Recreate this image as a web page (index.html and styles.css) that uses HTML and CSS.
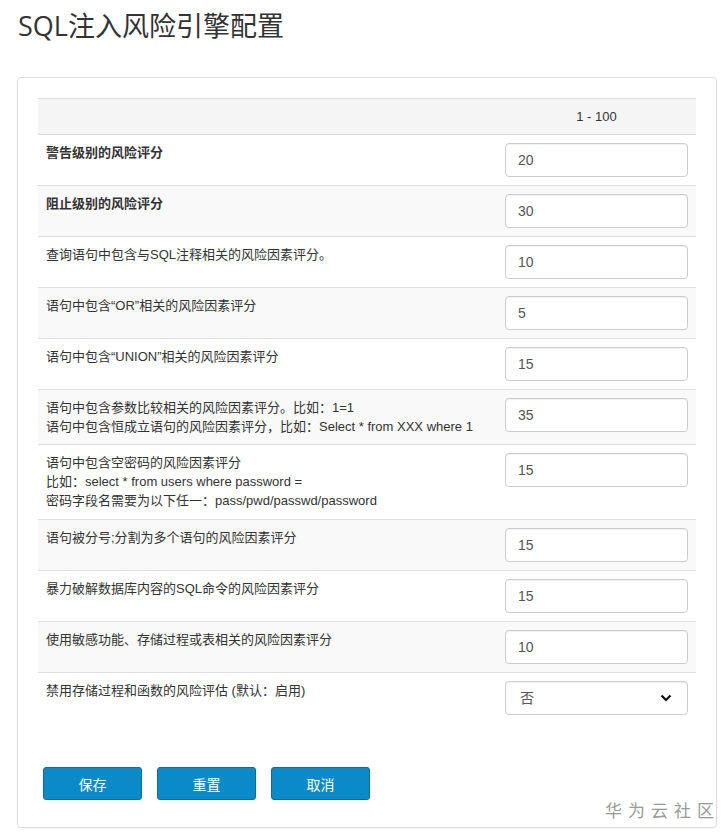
FILE: index.html
```html
<!DOCTYPE html>
<html>
<head>
  <meta charset="utf-8">
  <title>SQL注入风险引擎配置</title>
  <link rel="stylesheet" href="styles.css">
</head>
<body>
  <h1 class="page-title">SQL注入风险引擎配置</h1>

  <div class="panel">
    <form id="engineForm">
      <table class="config-table">
        <thead>
          <tr>
            <th class="label-col"></th>
            <th class="value-col">1 - 100</th>
          </tr>
        </thead>
        <tbody>
          <tr>
            <td class="label strong">警告级别的风险评分</td>
            <td><input type="text" value="20"></td>
          </tr>
          <tr>
            <td class="label strong">阻止级别的风险评分</td>
            <td><input type="text" value="30"></td>
          </tr>
          <tr>
            <td class="label">查询语句中包含与SQL注释相关的风险因素评分。</td>
            <td><input type="text" value="10"></td>
          </tr>
          <tr>
            <td class="label">语句中包含“OR”相关的风险因素评分</td>
            <td><input type="text" value="5"></td>
          </tr>
          <tr>
            <td class="label">语句中包含“UNION”相关的风险因素评分</td>
            <td><input type="text" value="15"></td>
          </tr>
          <tr>
            <td class="label">语句中包含参数比较相关的风险因素评分。比如：1=1<br>语句中包含恒成立语句的风险因素评分，比如：Select * from XXX where 1</td>
            <td><input type="text" value="35"></td>
          </tr>
          <tr>
            <td class="label tall">语句中包含空密码的风险因素评分<br>比如：select * from users where password =<br>密码字段名需要为以下任一：pass/pwd/passwd/password</td>
            <td><input type="text" value="15"></td>
          </tr>
          <tr>
            <td class="label">语句被分号;分割为多个语句的风险因素评分</td>
            <td><input type="text" value="15"></td>
          </tr>
          <tr>
            <td class="label">暴力破解数据库内容的SQL命令的风险因素评分</td>
            <td><input type="text" value="15"></td>
          </tr>
          <tr>
            <td class="label">使用敏感功能、存储过程或表相关的风险因素评分</td>
            <td><input type="text" value="10"></td>
          </tr>
          <tr>
            <td class="label">禁用存储过程和函数的风险评估 (默认：启用)</td>
            <td>
              <div class="select-wrap">
                <select>
                  <option>否</option>
                  <option>是</option>
                </select>
                <svg class="chevron" width="12" height="8" viewBox="0 0 12 8">
                  <path d="M1.5 1.5 L6 6 L10.5 1.5" fill="none" stroke="#111" stroke-width="2.2"/>
                </svg>
              </div>
            </td>
          </tr>
        </tbody>
      </table>

      <div class="form-actions">
        <button type="submit" class="btn">保存</button>
        <button type="reset" class="btn">重置</button>
        <button type="button" class="btn">取消</button>
      </div>
    </form>
    <div class="watermark">华为云社区</div>
  </div>
</body>
</html>
```

FILE: styles.css
```css
body { margin: 0; font-family: "Liberation Sans", "Noto Sans CJK SC", sans-serif; font-size: 13px; color: #333; background: #fff; }
.page-title { margin: 10px 0 0 18px; font-family: "Open Sans", "Noto Sans CJK SC", sans-serif; font-size: 27px; line-height: 32px; font-weight: normal; color: #333; }
.panel { position: relative; margin: 35px 10px 8px 17px; padding: 20px 20px 27px 20px; border: 1px solid #ddd; border-radius: 4px; box-shadow: 0 1px 2px rgba(0,0,0,0.05); }
.config-table { width: 100%; border-collapse: collapse; }
.config-table th, .config-table td { padding: 8px; line-height: 19px; border-top: 1px solid #ddd; vertical-align: top; text-align: left; }
.config-table td.tall { padding-bottom: 9px; }
.config-table thead th { background: #f5f5f5; font-weight: normal; }
.config-table th.value-col { width: 183px; text-align: center; }
.config-table tbody tr:nth-child(even) td { background: #f9f9f9; }
.label.strong { font-weight: bold; }
input, select { box-sizing: border-box; width: 100%; height: 34px; padding: 6px 12px; border: 1px solid #ccc; border-radius: 4px; font-family: "Liberation Sans", "Noto Sans CJK SC", sans-serif; font-size: 14px; color: #555; background: #fff; box-shadow: inset 0 1px 1px rgba(0,0,0,0.06); }
.select-wrap { position: relative; }
select { appearance: none; -webkit-appearance: none; padding-left: 14px; }
.chevron { position: absolute; right: 16px; top: 13px; pointer-events: none; }
.form-actions { display: flex; gap: 15px; margin: 44px 0 0 5px; }
.btn { width: 99px; height: 33px; background: #0b8ac9; color: #fff; border: 1px solid #0a6d9f; border-radius: 3px; font-family: "Liberation Sans", "Noto Sans CJK SC", sans-serif; font-size: 14px; cursor: pointer; }
.btn:hover { background: #0a79b1; }
.watermark { position: absolute; right: -4px; bottom: 5px; font-family: "Noto Sans CJK SC", sans-serif; font-size: 17px; letter-spacing: 6px; color: #9a9a9a; }
```
